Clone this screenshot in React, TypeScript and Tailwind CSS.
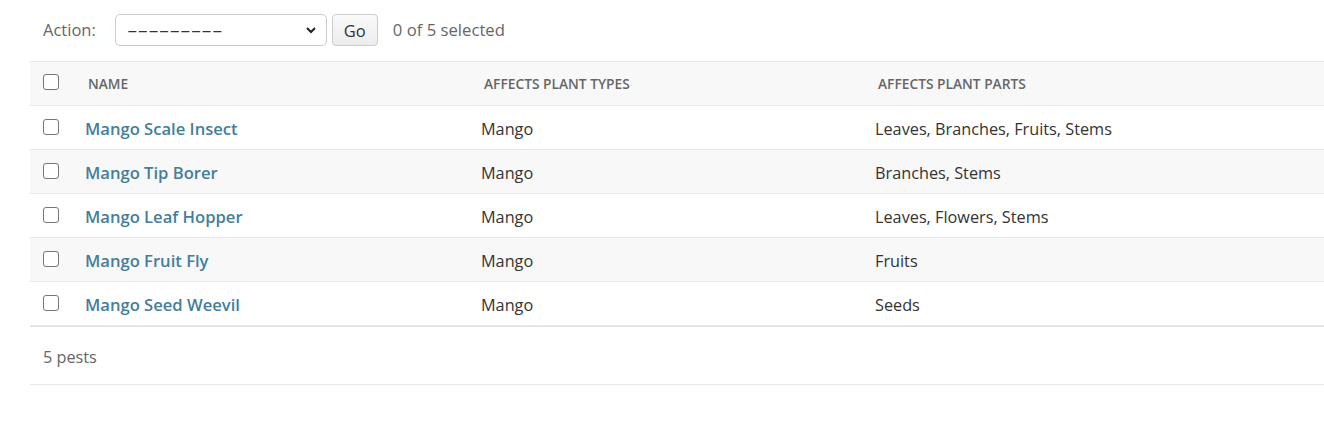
const pests = [
  { name: "Mango Scale Insect", types: "Mango", parts: "Leaves, Branches, Fruits, Stems" },
  { name: "Mango Tip Borer", types: "Mango", parts: "Branches, Stems" },
  { name: "Mango Leaf Hopper", types: "Mango", parts: "Leaves, Flowers, Stems" },
  { name: "Mango Fruit Fly", types: "Mango", parts: "Fruits" },
  { name: "Mango Seed Weevil", types: "Mango", parts: "Seeds" },
];

const Box = () => (
  <span className="block w-[16px] h-[16px] rounded-[3px] border border-[#767676] bg-white" />
);

const App = () => {
  return (
    <div
      className="w-[1324px] h-[432px] overflow-hidden bg-white pl-[30px] text-[#333]"
      style={{ fontFamily: '"Segoe UI", "Open Sans", sans-serif' }}
    >
      <div className="flex items-center h-[61px] pl-[13px] pb-[1px] text-[16.5px]">
        <span className="text-[#666]">Action:</span>
        <div className="ml-[19px] w-[212px] h-[32px] rounded-[5px] border border-[#ccc] flex items-center justify-between pl-[11px] pr-[9px]">
          <span className="inline-block text-[#333] scale-x-200 origin-left">---------</span>
          <svg width="12" height="12" viewBox="0 0 12 12" fill="none" stroke="#222" strokeWidth="2">
            <path d="M2 4l4 4 4-4" />
          </svg>
        </div>
        <button className="ml-[5px] w-[46px] h-[32px] rounded-[4px] border border-[#ccc] bg-gradient-to-b from-[#fafafa] to-[#ececec] text-[#333] text-[16.5px] flex items-center justify-center pt-[3px]">
          Go
        </button>
        <span className="ml-[15px] text-[#666] text-[16.7px]">0 of 5 selected</span>
      </div>

      <table className="w-[1320px] border-collapse text-[16.25px]">
        <thead>
          <tr className="h-[44px] bg-[#f8f8f8] border-t border-b border-[#e8e8e8]">
            <th className="w-[42px] pl-[13px] text-left align-middle">
              <div className="-mt-[4px]">
                <Box />
              </div>
            </th>
            <th className="w-[396px] pl-[16px] pt-[2px] text-left text-[13.75px] font-semibold uppercase text-[#666]">Name</th>
            <th className="w-[394px] pl-[16px] pt-[2px] text-left text-[13.75px] font-semibold uppercase text-[#666]">
              Affects plant types
            </th>
            <th className="pl-[16px] pt-[2px] text-left text-[13.75px] font-semibold uppercase text-[#666]">
              Affects plant parts
            </th>
          </tr>
        </thead>
        <tbody>
          {pests.map((p, i) => (
            <tr
              key={p.name}
              className={`h-[44px] border-b border-[#e8e8e8] ${i % 2 === 1 ? "bg-[#f8f8f8]" : "bg-white"}`}
            >
              <td className="pl-[13px] align-middle">
                <div className="-mt-[2px]">
                  <Box />
                </div>
              </td>
              <td className="pl-[13px] pt-[3px] font-semibold text-[16.6px] text-[#447e9b]">{p.name}</td>
              <td className="pl-[13px] pt-[3px]">{p.types}</td>
              <td className="pl-[13px] pt-[3px]">{p.parts}</td>
            </tr>
          ))}
        </tbody>
      </table>
      <div className="w-[1320px] h-[59px] border-t border-[#e0e0e0] border-b border-b-[#e8e8e8] flex items-center pl-[13px] pt-[3px] text-[16.25px] text-[#666]">
        5 pests
      </div>
    </div>
  );
};

export default App;
